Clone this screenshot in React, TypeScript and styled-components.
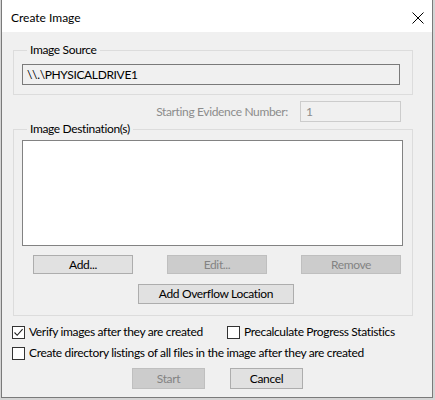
import React from "react";
import styled, { createGlobalStyle } from "styled-components";

const FONT = `"Lato", "Noto Sans", sans-serif`;

const Global = createGlobalStyle`
  html, body { margin: 0; padding: 0; background: #d4d4d4; }
  body { font-family: ${FONT}; font-size: 12px; color: #000; letter-spacing: -0.35px; }
  * { box-sizing: border-box; }
`;

const Window = styled.div`
  margin-left: 1px;
  width: 432px;
  height: 398px;
  border: 1px solid #7a7a7a;
  border-top: none;
  background: #f0f0f0;
  display: flex;
  flex-direction: column;
`;

const TitleBar = styled.div`
  height: 32px;
  background: #fff;
  display: flex;
  align-items: center;
  justify-content: space-between;
  padding: 0 8px 0 9px;
  font-size: 12px;
`;

const Title = styled.span`
  line-height: 14px;
  margin-top: 3px;
  letter-spacing: 0;
`;

const CloseBtn = styled.div`
  width: 12px;
  height: 12px;
  display: flex;
  margin-top: 4px;
`;

const Body = styled.div`
  padding: 11px 19px 0 11px;
  display: flex;
  flex-direction: column;
`;

const Group = styled.fieldset<{ $pb: number }>`
  margin: 0;
  border: 1px solid #dcdcdc;
  padding: 0 9px ${(p) => p.$pb}px 8px;
  display: flex;
  flex-direction: column;
  min-width: 0;
`;

const Legend = styled.legend`
  padding: 0 3px;
  margin-left: 5px;
  line-height: 14px;
  font-size: 12px;
`;

const SourceField = styled.div`
  margin-top: 7px;
  height: 21px;
  width: 378px;
  border: 1px solid #7a7a7a;
  background: #f0f0f0;
  padding-left: 4px;
  display: flex;
  align-items: center;
  line-height: 14px;
`;

const EvidenceRow = styled.div`
  margin-top: 6px;
  height: 21px;
  display: flex;
  justify-content: flex-end;
  align-items: center;
  gap: 12px;
  width: 388px;
`;

const DisabledLabel = styled.span`
  color: #8c8c8c;
  line-height: 14px;
`;

const EvidenceInput = styled.div`
  width: 101px;
  height: 21px;
  border: 1px solid #cccccc;
  background: #f0f0f0;
  color: #8c8c8c;
  padding-left: 5px;
  display: flex;
  align-items: center;
`;

const ListBox = styled.div`
  margin-top: 4px;
  width: 381px;
  height: 106px;
  background: #fff;
  border: 1px solid #828282;
`;

const ButtonRow = styled.div`
  margin: 9px 2px 0 11px;
  display: flex;
  justify-content: space-between;
`;

const Button = styled.button<{ $w: number; $h: number; $disabled?: boolean }>`
  width: ${(p) => p.$w}px;
  height: ${(p) => p.$h}px;
  border: 1px solid ${(p) => (p.$disabled ? "#bfbfbf" : "#adadad")};
  background: ${(p) => (p.$disabled ? "#cccccc" : "#e1e1e1")};
  color: ${(p) => (p.$disabled ? "#838383" : "#000")};
  font-family: ${FONT};
  font-size: 12px;
  letter-spacing: -0.35px;
  line-height: 14px;
  padding: 0;
  margin: 0;
  display: flex;
  align-items: center;
  justify-content: center;
`;

const OverflowButton = styled(Button)`
  margin: 10px 0 0 116px;
`;

const CheckRow = styled.div<{ $mt: number }>`
  margin-top: ${(p) => p.$mt}px;
  margin-left: -1px;
  display: flex;
  align-items: center;
`;

const CheckItem = styled.label<{ $w?: number }>`
  display: flex;
  align-items: center;
  gap: 4px;
  width: ${(p) => (p.$w ? `${p.$w}px` : "auto")};
  line-height: 14px;
  white-space: nowrap;
`;

const Box = styled.span`
  width: 13px;
  height: 13px;
  border: 1px solid #333;
  background: #fff;
  display: flex;
  flex-shrink: 0;
`;

const FooterRow = styled.div`
  margin-top: 8px;
  display: flex;
  gap: 25px;
  padding-left: 119px;
`;

const Check = ({ checked }: { checked?: boolean }) => (
  <Box>
    {checked && (
      <svg width="11" height="11" viewBox="0 0 11 11">
        <path d="M1.5 5.5 L4.2 8.3 L9.6 2.2" fill="none" stroke="#222" strokeWidth="1.1" />
      </svg>
    )}
  </Box>
);

export default function App() {
  return (
    <>
      <Global />
      <Window>
        <TitleBar>
          <Title>Create Image</Title>
          <CloseBtn>
            <svg width="12" height="12" viewBox="0 0 12 12">
              <path d="M0.5 0.5 L11.5 11.5 M11.5 0.5 L0.5 11.5" stroke="#000" strokeWidth="1" />
            </svg>
          </CloseBtn>
        </TitleBar>
        <Body>
          <Group $pb={9}>
            <Legend>Image Source</Legend>
            <SourceField>{"\\\\.\\PHYSICALDRIVE1"}</SourceField>
          </Group>
          <EvidenceRow>
            <DisabledLabel>Starting Evidence Number:</DisabledLabel>
            <EvidenceInput>1</EvidenceInput>
          </EvidenceRow>
          <Group $pb={11}>
            <Legend>Image Destination(s)</Legend>
            <ListBox />
            <ButtonRow>
              <Button $w={100} $h={19}>Add...</Button>
              <Button $w={100} $h={19} $disabled>Edit...</Button>
              <Button $w={100} $h={19} $disabled>Remove</Button>
            </ButtonRow>
            <OverflowButton $w={156} $h={20}>Add Overflow Location</OverflowButton>
          </Group>
          <CheckRow $mt={9}>
            <CheckItem $w={215}>
              <Check checked />
              Verify images after they are created
            </CheckItem>
            <CheckItem>
              <Check />
              Precalculate Progress Statistics
            </CheckItem>
          </CheckRow>
          <CheckRow $mt={7}>
            <CheckItem>
              <Check />
              Create directory listings of all files in the image after they are created
            </CheckItem>
          </CheckRow>
          <FooterRow>
            <Button $w={73} $h={21} $disabled>Start</Button>
            <Button $w={73} $h={21}>Cancel</Button>
          </FooterRow>
        </Body>
      </Window>
    </>
  );
}
